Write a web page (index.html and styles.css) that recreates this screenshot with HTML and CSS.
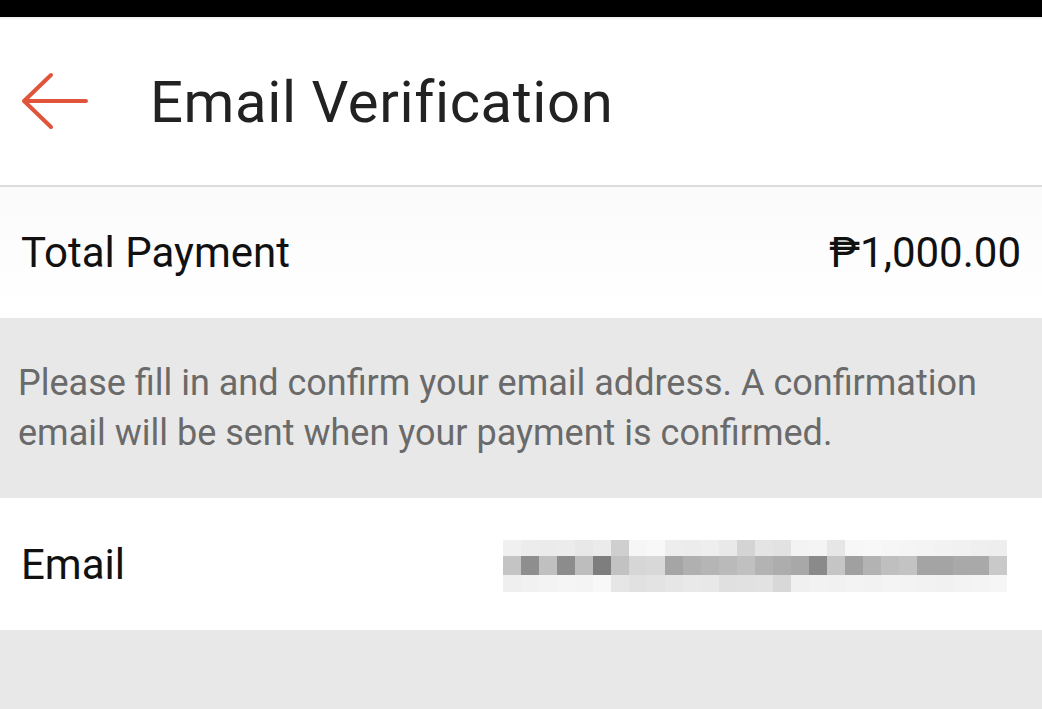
FILE: index.html
```html
<!DOCTYPE html>
<html lang="en">
<head>
<meta charset="utf-8">
<link rel="stylesheet" href="styles.css">
<title>Email Verification</title>
</head>
<body>
<div class="statusbar"></div>
<header class="header">
  <svg class="back" width="70" height="60" viewBox="0 0 70 60" aria-hidden="true">
    <path d="M67 29 H5 M32 3 L5 29 L32 55" fill="none" stroke="#e0553a" stroke-width="4" stroke-linecap="round" stroke-linejoin="round"/>
  </svg>
  <h1 class="title">Email Verification</h1>
</header>
<section class="row total">
  <span class="label">Total Payment</span>
  <span class="amount">₱1,000.00</span>
</section>
<section class="notice">
  <p>Please fill in and confirm your email address. A confirmation email will be sent when your payment is confirmed.</p>
</section>
<section class="row email">
  <span class="label">Email</span>
  <div class="blur" aria-label="hidden email">
    <div class="blur-row blur-top">
      <i style="background:#f0f0f0"></i><i style="background:#ececec"></i><i style="background:#ebebeb"></i><i style="background:#ececec"></i><i style="background:#e8e8e8"></i><i style="background:#ebebeb"></i><i style="background:#cfcfcf"></i><i style="background:#f6f6f6"></i><i style="background:#f8f8f8"></i><i style="background:#ededed"></i><i style="background:#ececec"></i><i style="background:#eeeeee"></i><i style="background:#e9e9e9"></i><i style="background:#d4d4d4"></i><i style="background:#e4e4e4"></i><i style="background:#e2e2e2"></i><i style="background:#f3f3f3"></i><i style="background:#f4f4f4"></i><i style="background:#e6e6e6"></i><i style="background:#f7f7f7"></i><i style="background:#f8f8f8"></i><i style="background:#f6f6f6"></i><i style="background:#f5f5f5"></i><i style="background:#f4f4f4"></i><i style="background:#f2f2f2"></i><i style="background:#f1f1f1"></i><i style="background:#efefef"></i><i style="background:#eeeeee"></i>
    </div>
    <div class="blur-row blur-mid">
      <i style="background:#c4c4c4"></i><i style="background:#8e8e8e"></i><i style="background:#c0c0c0"></i><i style="background:#8c8c8c"></i><i style="background:#bdbdbd"></i><i style="background:#7e7e7e"></i><i style="background:#c2c2c2"></i><i style="background:#d6d6d6"></i><i style="background:#d8d8d8"></i><i style="background:#a5a5a5"></i><i style="background:#b0b0b0"></i><i style="background:#b5b5b5"></i><i style="background:#bababa"></i><i style="background:#c0c0c0"></i><i style="background:#b3b3b3"></i><i style="background:#adadad"></i><i style="background:#a8a8a8"></i><i style="background:#8a8a8a"></i><i style="background:#c5c5c5"></i><i style="background:#a0a0a0"></i><i style="background:#b3b3b3"></i><i style="background:#bfbfbf"></i><i style="background:#c3c3c3"></i><i style="background:#a4a4a4"></i><i style="background:#a4a4a4"></i><i style="background:#a9a9a9"></i><i style="background:#a9a9a9"></i><i style="background:#c9c9c9"></i>
    </div>
    <div class="blur-row blur-bot">
      <i style="background:#efefef"></i><i style="background:#f1f1f1"></i><i style="background:#f3f3f3"></i><i style="background:#f5f5f5"></i><i style="background:#f4f4f4"></i><i style="background:#f8f8f8"></i><i style="background:#e6e6e6"></i><i style="background:#e1e1e1"></i><i style="background:#e3e3e3"></i><i style="background:#e6e6e6"></i><i style="background:#e9e9e9"></i><i style="background:#e8e8e8"></i><i style="background:#e0e0e0"></i><i style="background:#e1e1e1"></i><i style="background:#e2e2e2"></i><i style="background:#d8d8d8"></i><i style="background:#f0f0f0"></i><i style="background:#f2f2f2"></i><i style="background:#f1f1f1"></i><i style="background:#f3f3f3"></i><i style="background:#f2f2f2"></i><i style="background:#f4f4f4"></i><i style="background:#f3f3f3"></i><i style="background:#f2f2f2"></i><i style="background:#f1f1f1"></i><i style="background:#f3f3f3"></i><i style="background:#f4f4f4"></i><i style="background:#f6f6f6"></i>
    </div>
  </div>
</section>
<div class="filler"></div>
</body>
</html>
```

FILE: styles.css
```css
* { box-sizing: border-box; }
html, body {
  margin: 0;
  padding: 0;
  width: 1042px;
  height: 709px;
  overflow: hidden;
  background: #e8e8e8;
  font-family: Roboto, "Noto Sans", "DejaVu Sans", sans-serif;
}
.statusbar {
  height: 17px;
  background: #000;
}
.header {
  height: 170px;
  background: #fff;
  border-bottom: 2px solid #dcdcdc;
  border-top: 2px solid #f2f2f2;
  display: flex;
  align-items: center;
  padding-left: 19px;
}
.back {
  flex: none;
}
.title {
  margin: 0 0 0 61px;
  font-size: 58px;
  font-weight: 400;
  color: #222;
  letter-spacing: 0.6px;
}
.row {
  display: flex;
  align-items: center;
  justify-content: space-between;
  padding: 0 21px 0 21px;
  background: #fff;
}
.total {
  height: 131px;
  background: linear-gradient(#fbfbfb, #fff);
}
.label {
  font-size: 42px;
  color: #111;
}
.amount {
  font-size: 42px;
  color: #111;
}
.notice {
  height: 180px;
  background: #e8e8e8;
  padding: 40px 18px 0;
}
.notice p {
  margin: 0;
  font-size: 36px;
  line-height: 50px;
  color: #6a6a6a;
}
.email {
  height: 132px;
}
.blur {
  display: flex;
  flex-direction: column;
  width: 504px;
  margin: 4px 14px 0 0;
}
.blur-row {
  display: flex;
}
.blur-row i {
  flex: 1;
  display: block;
}
.blur-top {
  height: 16px;
}
.blur-mid {
  height: 19px;
}
.blur-bot {
  height: 17px;
}
.filler {
  height: 100px;
  background: #e8e8e8;
}
```
